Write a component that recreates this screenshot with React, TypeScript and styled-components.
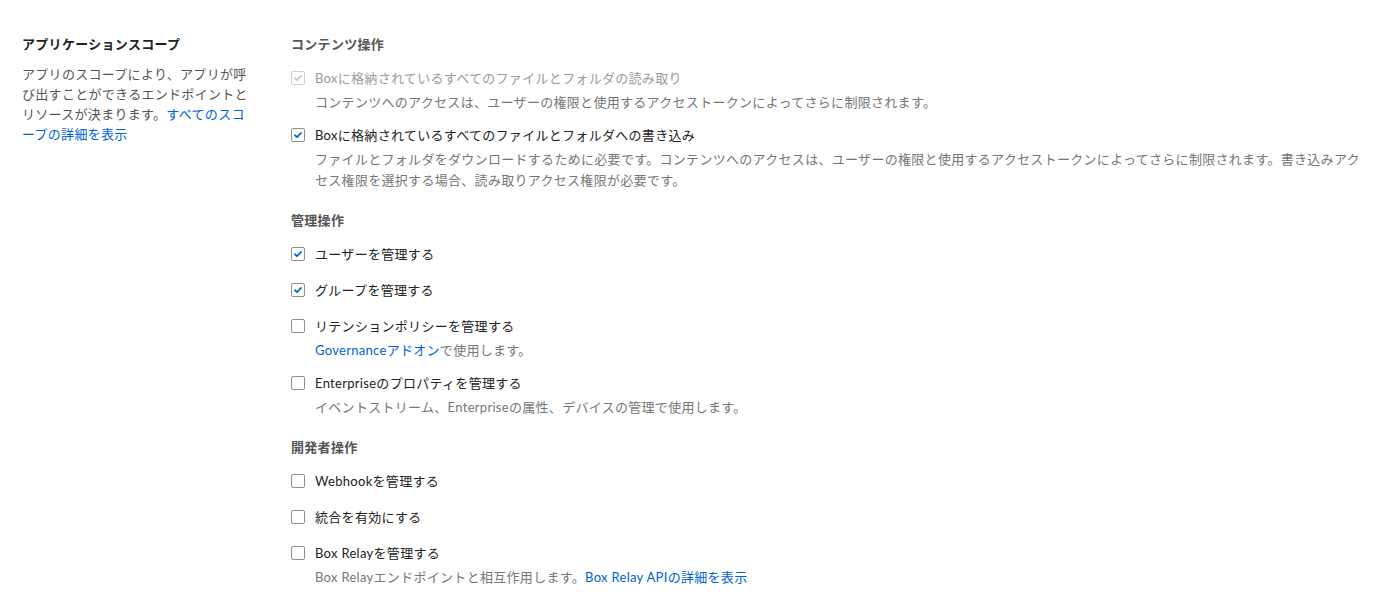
import React from "react";
import styled, { createGlobalStyle } from "styled-components";

const GlobalStyle = createGlobalStyle`
  html, body {
    margin: 0;
    background: #fff;
  }
  body {
    font-family: Lato, "Noto Sans CJK JP", sans-serif;
    font-size: 13px;
    color: #222;
    -webkit-font-smoothing: antialiased;
  }
`;

const Page = styled.div`
  display: grid;
  grid-template-columns: 232px 1fr;
  column-gap: 37px;
  padding: 34px 10px 20px 22px;
`;

const Aside = styled.div`
  display: flex;
  flex-direction: column;
`;

const AsideTitle = styled.h3`
  margin: 0;
  font-size: 13px;
  line-height: 20px;
  font-weight: 700;
  color: #222;
  letter-spacing: 0.3px;
`;

const AsideText = styled.p`
  margin: 10px 0 0;
  font-size: 13px;
  line-height: 20px;
  color: #555;
  letter-spacing: 0.3px;
`;

const Link = styled.a`
  color: #0061d5;
  text-decoration: none;
`;

const Main = styled.div`
  display: flex;
  flex-direction: column;
`;

const Section = styled.section`
  display: flex;
  flex-direction: column;
  & + & {
    margin-top: 7px;
  }
`;

const SectionTitle = styled.h4`
  margin: 0 0 14px;
  font-size: 13px;
  line-height: 20px;
  font-weight: 700;
  color: #555;
  letter-spacing: 0.3px;
`;

const Item = styled.div`
  display: flex;
  flex-direction: column;
  margin-bottom: 16px;
`;

const Row = styled.label<{ $disabled?: boolean }>`
  display: flex;
  align-items: center;
  gap: 10px;
  line-height: 20px;
  color: ${({ $disabled }) => ($disabled ? "#9a9a9a" : "#222")};
  letter-spacing: 0.3px;
`;

const Box = styled.span<{ $disabled?: boolean }>`
  flex: none;
  width: 12px;
  height: 12px;
  border: 1px solid ${({ $disabled }) => ($disabled ? "#cfcfcf" : "#8f8f8f")};
  border-radius: 2px;
  background: #fff;
  display: flex;
  align-items: center;
  justify-content: center;
`;

const Description = styled.div`
  margin: 4px 0 -4px 24px;
  line-height: 21px;
  color: #767676;
  letter-spacing: 0.3px;
`;

type Opt = {
  label: string;
  checked?: boolean;
  disabled?: boolean;
  desc?: React.ReactNode;
};

const Checkbox = ({ checked, disabled }: { checked?: boolean; disabled?: boolean }) => (
  <Box $disabled={disabled}>
    {checked && (
      <svg width="10" height="10" viewBox="0 0 10 10">
        <path
          d="M2 5.3 L4 7.2 L8 3"
          fill="none"
          stroke={disabled ? "#c4c4c4" : "#0061d5"}
          strokeWidth="1.8"
          strokeLinecap="round"
          strokeLinejoin="round"
        />
      </svg>
    )}
  </Box>
);

const Option = ({ label, checked, disabled, desc }: Opt) => (
  <Item>
    <Row $disabled={disabled}>
      <Checkbox checked={checked} disabled={disabled} />
      {label}
    </Row>
    {desc && <Description>{desc}</Description>}
  </Item>
);

const sections: { title: string; options: Opt[] }[] = [
  {
    title: "コンテンツ操作",
    options: [
      {
        label: "Boxに格納されているすべてのファイルとフォルダの読み取り",
        checked: true,
        disabled: true,
        desc: "コンテンツへのアクセスは、ユーザーの権限と使用するアクセストークンによってさらに制限されます。",
      },
      {
        label: "Boxに格納されているすべてのファイルとフォルダへの書き込み",
        checked: true,
        desc: "ファイルとフォルダをダウンロードするために必要です。コンテンツへのアクセスは、ユーザーの権限と使用するアクセストークンによってさらに制限されます。書き込みアクセス権限を選択する場合、読み取りアクセス権限が必要です。",
      },
    ],
  },
  {
    title: "管理操作",
    options: [
      { label: "ユーザーを管理する", checked: true },
      { label: "グループを管理する", checked: true },
      {
        label: "リテンションポリシーを管理する",
        desc: (
          <>
            <Link href="#">Governanceアドオン</Link>で使用します。
          </>
        ),
      },
      {
        label: "Enterpriseのプロパティを管理する",
        desc: "イベントストリーム、Enterpriseの属性、デバイスの管理で使用します。",
      },
    ],
  },
  {
    title: "開発者操作",
    options: [
      { label: "Webhookを管理する" },
      { label: "統合を有効にする" },
      {
        label: "Box Relayを管理する",
        desc: (
          <>
            Box Relayエンドポイントと相互作用します。
            <Link href="#">Box Relay APIの詳細を表示</Link>
          </>
        ),
      },
    ],
  },
];

export default function App() {
  return (
    <>
      <GlobalStyle />
      <Page>
        <Aside>
          <AsideTitle>アプリケーションスコープ</AsideTitle>
          <AsideText>
            アプリのスコープにより、アプリが呼び出すことができるエンドポイントとリソースが決まります。
            <Link href="#">すべてのスコープの詳細を表示</Link>
          </AsideText>
        </Aside>
        <Main>
          {sections.map((s) => (
            <Section key={s.title}>
              <SectionTitle>{s.title}</SectionTitle>
              {s.options.map((o) => (
                <Option key={o.label} {...o} />
              ))}
            </Section>
          ))}
        </Main>
      </Page>
    </>
  );
}
